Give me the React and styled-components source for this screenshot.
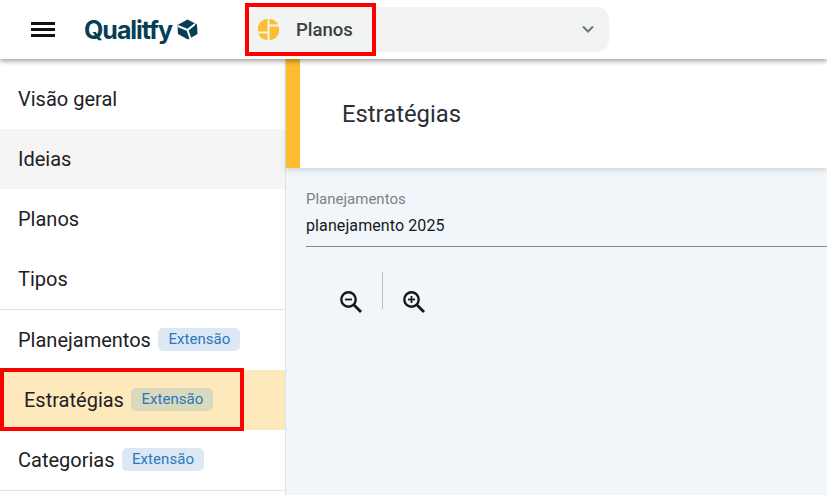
import styled, { createGlobalStyle } from "styled-components";

const GlobalStyle = createGlobalStyle`
  html, body {
    margin: 0;
    padding: 0;
    background: #fff;
    font-family: Roboto, "Liberation Sans", sans-serif;
  }
  * { box-sizing: border-box; }
`;

const Page = styled.div`
  width: 827px;
  height: 495px;
  overflow: hidden;
  position: relative;
  display: flex;
  flex-direction: column;
`;

const Header = styled.header`
  height: 59px;
  flex: none;
  display: flex;
  align-items: center;
  background: #fff;
  box-shadow: 0 2px 5px rgba(0, 0, 0, 0.4);
  position: relative;
  z-index: 2;
  padding-left: 31px;
`;

const Burger = styled.div`
  width: 24px;
  height: 15px;
  display: flex;
  flex-direction: column;
  justify-content: space-between;
  margin-right: 29px;
  span {
    display: block;
    height: 3px;
    background: #111;
  }
`;

const Logo = styled.div`
  display: flex;
  align-items: center;
  width: 161px;
  color: #063e56;
  font-family: Inter, sans-serif;
  font-weight: 700;
  font-size: 25px;
  letter-spacing: -1.05px;
  gap: 5px;
`;

const AppSelect = styled.div`
  width: 364px;
  height: 45px;
  border-radius: 12px;
  background: #f2f4f4;
  display: flex;
  align-items: center;
  padding: 0 14px 0 13px;
  font-size: 18.5px;
  font-weight: 500;
  color: #3c4043;
  span { margin-left: 17px; flex: 1; }
`;

const Body = styled.div`
  flex: 1;
  display: flex;
  min-height: 0;
`;

const Sidebar = styled.nav`
  width: 286px;
  flex: none;
  background: #fff;
  border-right: 1px solid #dfe1e3;
  padding-top: 10px;
`;

const Group = styled.div`
  border-bottom: 1px solid #e0e0e0;
`;

const Item = styled.div`
  height: 60px;
  display: flex;
  align-items: center;
  gap: 7px;
  padding-left: ${(p) => (p.$active ? "24px" : "18px")};
  font-size: 20px;
  color: #1d2126;
  background: ${(p) => (p.$active ? "#fee9bd" : p.$hover ? "#f5f5f5" : "transparent")};
`;

const Badge = styled.span`
  height: 23px;
  margin-top: -2px;
  padding: 0 9.5px 0 10.5px;
  display: flex;
  align-items: center;
  border-radius: 5px;
  font-size: 15px;
  letter-spacing: 0.05px;
  color: #2a78bd;
  background: ${(p) => (p.$active ? "#d8d9bd" : "#dce9f4")};
`;

const Main = styled.main`
  flex: 1;
  background: #f1f6fb;
`;

const TitleCard = styled.div`
  height: 109px;
  background: #fff;
  border-left: 14px solid #fdbd2e;
  box-shadow: 0 2px 6px rgba(0, 0, 0, 0.14);
  display: flex;
  align-items: center;
  padding-left: 42px;
  font-size: 23.8px;
  color: #2b2f33;
`;

const Field = styled.div`
  margin: 22px 0 0 20px;
  height: 57px;
  border-bottom: 1px solid #85898c;
`;

const FieldLabel = styled.div`
  font-size: 15px;
  line-height: 18px;
  color: #7d8184;
`;

const FieldValue = styled.div`
  margin-top: 8px;
  font-size: 16px;
  line-height: 19px;
  letter-spacing: 0.1px;
  color: #16191c;
`;

const Tools = styled.div`
  display: flex;
  align-items: flex-end;
  margin: 25px 0 0 53px;
`;

const ToolIcon = styled.div`
  height: 24px;
  margin-bottom: -5px;
`;

const Sep = styled.div`
  width: 1px;
  height: 37px;
  background: #b9bcbf;
  margin: 0 19px 0 19px;
`;

const Highlight = styled.div`
  position: absolute;
  left: ${(p) => p.$x}px;
  top: ${(p) => p.$y}px;
  width: ${(p) => p.$w}px;
  height: ${(p) => p.$h}px;
  border: 4px solid #fe0000;
  z-index: 5;
`;

const LogoMark = () => (
  <svg width="21" height="21" viewBox="0 0 21 21">
    <path d="M10.5 0.5 L20 5.5 L20.5 15 L11 20.5 L1 15 L0.5 6 Z" fill="#063e56" />
    <path
      d="M1 7 L10.5 11 L18 5 M10.5 11 L13.5 20"
      fill="none"
      stroke="#fff"
      strokeWidth="2"
    />
  </svg>
);

const PlanIcon = () => (
  <svg width="21" height="21" viewBox="0 0 21 21">
    <clipPath id="plan-disc">
      <rect x="0" y="0" width="21" height="21" rx="9" />
    </clipPath>
    <g clipPath="url(#plan-disc)" fill="#fdbd2e">
      <rect x="0" y="0" width="9.5" height="12.5" />
      <rect x="0" y="14.5" width="9.5" height="6.5" />
      <rect x="11.5" y="0" width="9.5" height="5.5" />
      <rect x="11.5" y="7.5" width="9.5" height="13.5" />
    </g>
  </svg>
);

const Chevron = () => (
  <svg width="14" height="9" viewBox="0 0 14 9">
    <path d="M2 1.5 L7 6.5 L12 1.5" fill="none" stroke="#6f7678" strokeWidth="2" />
  </svg>
);

const Zoom = ({ plus }) => (
  <svg width="24" height="24" viewBox="0 0 24 24">
    <circle cx="9.5" cy="9.5" r="7.2" fill="none" stroke="#16191c" strokeWidth="2.4" />
    <path d="M14.8 14.8 L22 22" stroke="#16191c" strokeWidth="2.8" />
    <path d="M6 9.5 H13" stroke="#16191c" strokeWidth="1.8" />
    {plus && <path d="M9.5 6 V13" stroke="#16191c" strokeWidth="1.8" />}
  </svg>
);

const App = () => {
  return (
    <Page>
      <GlobalStyle />
      <Header>
        <Burger>
          <span />
          <span />
          <span />
        </Burger>
        <Logo>
          Qualitfy
          <LogoMark />
        </Logo>
        <AppSelect>
          <PlanIcon />
          <span>Planos</span>
          <Chevron />
        </AppSelect>
      </Header>
      <Body>
        <Sidebar>
          <Group>
            <Item>Visão geral</Item>
            <Item $hover>Ideias</Item>
            <Item>Planos</Item>
            <Item>Tipos</Item>
          </Group>
          <Group>
            <Item>
              Planejamentos <Badge>Extensão</Badge>
            </Item>
            <Item $active>
              Estratégias <Badge $active>Extensão</Badge>
            </Item>
            <Item>
              Categorias <Badge>Extensão</Badge>
            </Item>
          </Group>
        </Sidebar>
        <Main>
          <TitleCard>Estratégias</TitleCard>
          <Field>
            <FieldLabel>Planejamentos</FieldLabel>
            <FieldValue>planejamento 2025</FieldValue>
          </Field>
          <Tools>
            <ToolIcon>
              <Zoom />
            </ToolIcon>
            <Sep />
            <ToolIcon>
              <Zoom plus />
            </ToolIcon>
          </Tools>
        </Main>
      </Body>
      <Highlight $x={245} $y={3} $w={131} $h={53} />
      <Highlight $x={0} $y={368} $w={244} $h={63} />
    </Page>
  );
};

export default App;
